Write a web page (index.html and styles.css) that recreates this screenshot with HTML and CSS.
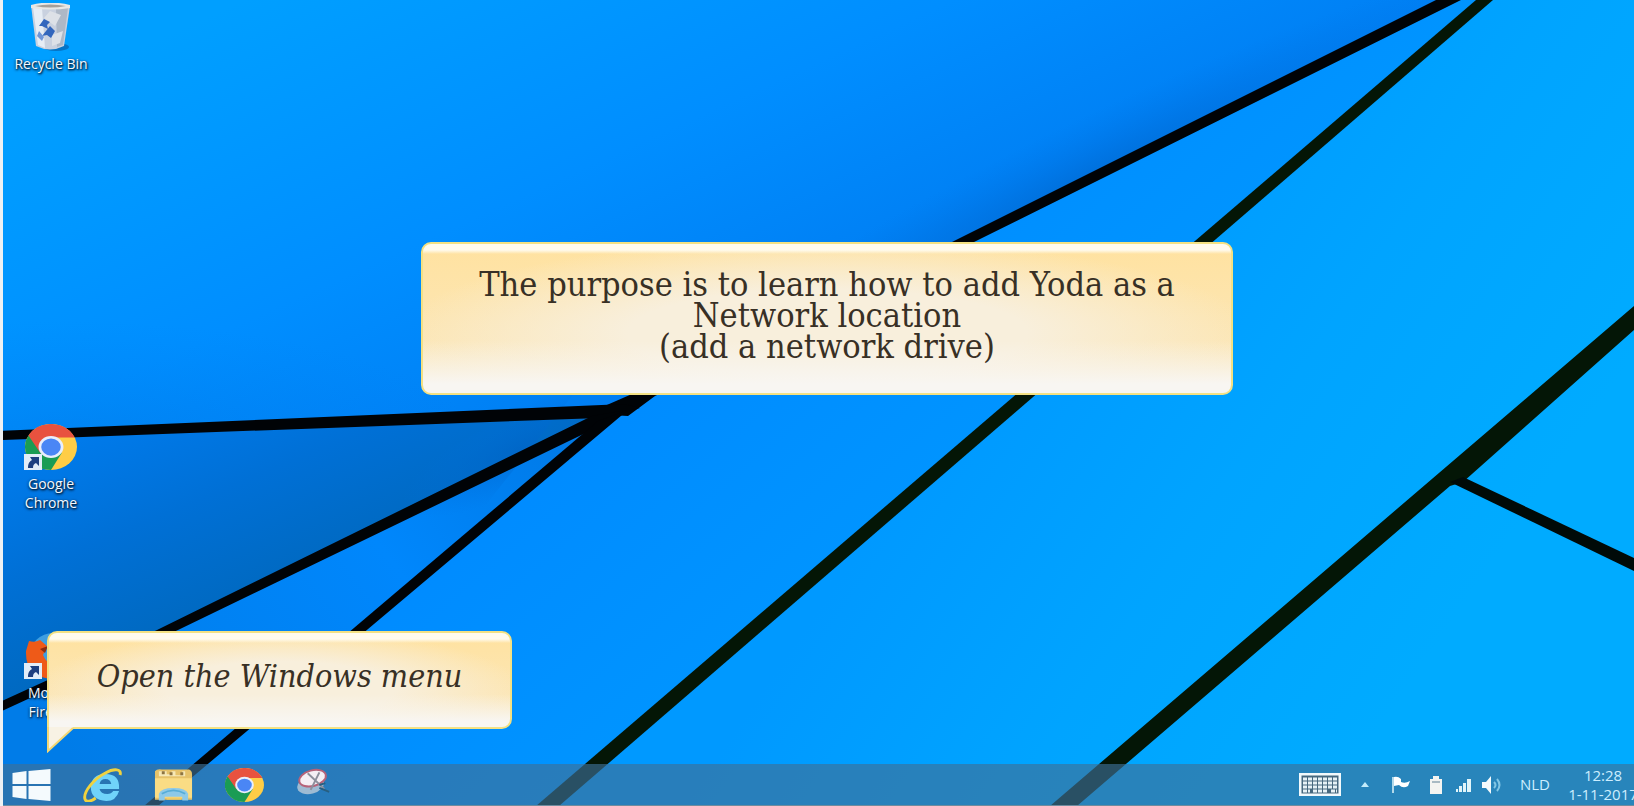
FILE: index.html
```html
<!DOCTYPE html>
<html lang="en">
<head>
<meta charset="utf-8">
<title>Desktop</title>
<link rel="stylesheet" href="styles.css">
</head>
<body>
<svg class="symbols" aria-hidden="true">
  <symbol id="chrome" viewBox="0 0 48 48" preserveAspectRatio="none">
    <circle cx="24" cy="24" r="24" fill="#ffcd46"/>
    <path d="M24 24 3.200 12A24 24 0 0 0 24 48L34 30Z" fill="#1a9c54"/>
    <path d="M3.200 12A24 24 0 0 1 44.800 12L46 14H24L14 30Z" fill="#e8523f"/>
    <circle cx="24" cy="24" r="11.500" fill="#e9eefb"/>
    <circle cx="24" cy="24" r="9" fill="#4a86f5"/>
  </symbol>
  <symbol id="shortcut" viewBox="0 0 18 16">
    <path d="M0 0h18v16H0z" fill="#e2edf8"/>
    <path d="M4 14C4 9 6 7 8 6L6 3h9v9l-3-3c-2 1-3 2-3 5z" fill="#1d3f80"/>
  </symbol>
</svg>
<main class="desktop">
  <svg class="wallpaper" viewBox="0 0 1634 806" preserveAspectRatio="none" aria-hidden="true">
    <defs>
      <linearGradient id="sky" gradientUnits="userSpaceOnUse" x1="420" y1="-80" x2="640" y2="405">
        <stop offset="0" stop-color="#009fff"/><stop offset=".55" stop-color="#008eff"/><stop offset="1" stop-color="#007df2"/>
      </linearGradient>
      <linearGradient id="wedge" gradientUnits="userSpaceOnUse" x1="100" y1="400" x2="200" y2="640">
        <stop offset="0" stop-color="#007df0"/><stop offset=".5" stop-color="#0070d6"/><stop offset="1" stop-color="#0068bd"/>
      </linearGradient>
      <linearGradient id="sliver" gradientUnits="userSpaceOnUse" x1="600" y1="420" x2="100" y2="800">
        <stop offset="0" stop-color="#0078e4"/><stop offset=".4" stop-color="#0087fc"/><stop offset="1" stop-color="#007ce8"/>
      </linearGradient>
      <linearGradient id="band" gradientUnits="userSpaceOnUse" x1="600" y1="400" x2="860" y2="700">
        <stop offset="0" stop-color="#008bff"/><stop offset="1" stop-color="#0098ff"/>
      </linearGradient>
      <linearGradient id="right" gradientUnits="userSpaceOnUse" x1="960" y1="400" x2="1400" y2="700">
        <stop offset="0" stop-color="#0099ff"/><stop offset=".5" stop-color="#00a4ff"/><stop offset="1" stop-color="#00abff"/>
      </linearGradient>
      <radialGradient id="shade">
        <stop offset="0" stop-color="#0064c8" stop-opacity=".6"/><stop offset="1" stop-color="#0070e0" stop-opacity="0"/>
      </radialGradient>
      <clipPath id="above"><path d="M0 0H1448L620 410 0 436Z"/></clipPath>
      <clipPath id="between"><path d="M0 436 620 410 0 708Z"/></clipPath>
    </defs>
    <path d="M0 0H1634V806H0Z" fill="url(#right)"/>
    <path d="M0 0H1485L547 806H0Z" fill="url(#band)"/>
    <path d="M620 410 152 806H0V707Z" fill="url(#sliver)"/>
    <path d="M0 436 620 410 0 708Z" fill="url(#wedge)"/>
    <path d="M0 0H1448L620 410 0 436Z" fill="url(#sky)"/>
    <g clip-path="url(#above)">
      <ellipse cx="1090" cy="180" rx="440" ry="60" transform="rotate(-26 1090 180)" fill="url(#shade)"/>
      <ellipse cx="60" cy="440" rx="420" ry="120" fill="url(#shade)" opacity=".35"/>
    </g>
    <ellipse cx="520" cy="450" rx="130" ry="40" transform="rotate(-26 520 450)" fill="url(#shade)" clip-path="url(#between)"/>
    <g fill="#000306">
      <path d="M1436 0H1461L972 243 655 396 628 416 610 415 600 408 632 394 950 243Z"/>
      <path d="M0 431 625 404 640 408 600 418 0 440Z"/>
      <path d="M592 416 626 410 600 426 178 630 0 712V702L157 630Z"/>
      <path d="M598 421 628 410 158 806H144Z"/>
    </g>
    <g fill="#041606">
      <path d="M1476 0H1493L559 806H536Z"/>
      <path d="M1634 306V330L1463 482 1450 486 1077 806H1050Z"/>
      <path d="M1450 482 1463 477 1634 558V571Z" fill="#000a08"/>
    </g>
  </svg>

  <button class="shortcut shortcut-bin">
    <svg class="bin-art" viewBox="0 0 42 48" aria-hidden="true">
      <ellipse cx="26" cy="44" rx="13" ry="4" fill="#0674c5"/>
      <path d="M1 2 6 43Q20 50 34 43L40 3Z" fill="#c9d1df"/>
      <path d="M3 4 8 42 15 45 12 5Z" fill="#e7edf5"/>
      <path d="M26 6 38 5 33 42 27 44Z" fill="#aeb8c6"/>
      <path d="M1 2Q20-3 40 2V5Q20 8 1 5Z" fill="#e9e8e5"/>
      <path d="M5 3Q20 0 36 3 20 6 5 3Z" fill="#a69f98"/>
      <path d="M20 8 31 12 25 23 14 15ZM22 32 33 28 30 40 22 43Z" fill="#dde1e7"/>
      <path d="m9 23 5-7 6 3-3 3 1 4-6-3zM20 23l5 5-4 7-4-3-5 1 4-5z" fill="#3266bd"/>
      <path d="m9 28 5 6-2 4-5-5z" fill="#6f96d8"/>
    </svg>
    <span class="shortcut-label">Recycle Bin</span>
  </button>
  <button class="shortcut shortcut-chrome">
    <span class="shortcut-art"><svg class="art" aria-hidden="true"><use href="#chrome"/></svg><svg class="arrow" aria-hidden="true"><use href="#shortcut"/></svg></span>
    <span class="shortcut-label">Google Chrome</span>
  </button>
  <button class="shortcut shortcut-firefox">
    <span class="shortcut-art">
      <svg class="art" viewBox="0 0 52 46" aria-hidden="true">
        <ellipse cx="28" cy="22" rx="23" ry="22" fill="#3f9fe0"/>
        <path d="M4 8Q10 10 15 7L22 13 18 22Q22 33 34 32 46 30 48 14 58 44 28 46 0 45 1 18Z" fill="#ee5a18"/>
        <path d="m15 16 8-3-3 7z" fill="#8c2d12"/>
      </svg><svg class="arrow" aria-hidden="true"><use href="#shortcut"/></svg></span>
    <span class="shortcut-label">Mozilla Firefox</span>
  </button>

  <section class="callout callout-purpose">
    <p class="callout-text">The purpose is to learn how to add Yoda as a Network location<br>(add a network drive)</p>
  </section>
  <section class="callout callout-step">
    <p class="callout-text">Open the Windows menu</p>
    <svg class="callout-tail" viewBox="0 0 28 26" aria-hidden="true">
      <path d="M1 0V24L26 1V0Z" fill="#f8f2e4"/>
      <path d="M1 0V24L26 1" fill="none" stroke="#f3d774" stroke-width="2"/>
    </svg>
  </section>

  <footer class="taskbar">
    <nav class="launchers" aria-label="Taskbar">
      <button class="launcher" aria-label="Start">
        <svg class="launcher-art" viewBox="0 0 38 34" aria-hidden="true"><path d="M0 5 14 3V16H0ZM16 3 38 1V16H16ZM0 18H14V31L0 29ZM16 18H38V33L16 31Z" fill="#f4fafd"/></svg>
      </button>
      <button class="launcher" aria-label="Internet Explorer">
        <svg class="launcher-art" viewBox="0 0 40 34" preserveAspectRatio="none" aria-hidden="true">
          <path d="M37 21H17Q18 26 25 26 29 26 31 23H37Q34 33 24 33 8 32 8 19 9 6 23 6 38 6 37 21ZM17 16H29Q28 11 23 11 18 11 17 16Z" fill="#70d3fa"/>
          <path d="M38 7C40 1 32 0 23 5 11 11 0 24 2 31 3 35 9 33 13 30" fill="none" stroke="#efd23f" stroke-width="3"/>
        </svg>
      </button>
      <button class="launcher" aria-label="File Explorer">
        <svg class="launcher-art" viewBox="0 0 40 34" aria-hidden="true">
          <path d="M1 3Q3 0 8 1H36Q39 2 39 6V32H1Z" fill="#e6c269"/>
          <path d="M1 10H39V30H1Z" fill="#fadc84"/>
          <path d="M5 3h8v3h5V3h4v4h7V3h3v5H5Z" fill="#f6e8b6"/>
          <path d="M8 3h3v3H8zM16 4h3v3h-3zM27 4h3v3h-3z" fill="#8d7443"/>
          <path d="M5 33V26Q7 20 20 20T35 26V33H29V29H11V33Z" fill="#8dc9e8"/>
          <path d="M8 26Q20 19 32 26" fill="none" stroke="#56add8" stroke-width="2"/>
          <path d="M13 30H28V32H13Z" fill="#f1cb64"/>
        </svg>
      </button>
      <button class="launcher" aria-label="Google Chrome"><svg class="launcher-art" aria-hidden="true"><use href="#chrome"/></svg></button>
      <button class="launcher" aria-label="Snipping Tool">
        <svg class="launcher-art" viewBox="0 0 40 34" aria-hidden="true">
          <ellipse cx="15" cy="17" rx="14" ry="9" transform="rotate(-15 15 17)" fill="#9ebbd3"/>
          <ellipse cx="17" cy="10" rx="14" ry="8" transform="rotate(-15 17 10)" fill="#f5eff5" stroke="#b66279" stroke-width="2"/>
          <path d="m12 5 17 16M24 4l-9 18" stroke="#8d8f9c" stroke-width="2"/>
          <path d="m24 17 6-2M24 20l10 4" stroke="#285f80" stroke-width="2"/>
        </svg>
      </button>
    </nav>
    <div class="tray">
      <button class="tray-item tray-keyboard" aria-label="Touch keyboard">
        <svg class="tray-art" viewBox="0 0 42 23" aria-hidden="true"><rect x="1" y="1" width="40" height="21" fill="#46687e" stroke="#f1f9fc" stroke-width="3"/><path d="M4 6h34M4 10h34M4 14h34M4 18h7m3 0h15m3 0h6" stroke="#e7f2f6" stroke-width="3" stroke-dasharray="4 1"/></svg>
      </button>
      <button class="tray-item tray-more" aria-label="Show hidden icons"><svg class="tray-art" viewBox="0 0 8 5" aria-hidden="true"><path d="m0 5 4-5 4 5Z" fill="#c2ebfb"/></svg></button>
      <button class="tray-item tray-flag" aria-label="Action Center"><svg class="tray-art" viewBox="0 0 20 17" aria-hidden="true"><path d="M1 1h2v16H1Z" fill="#b2d9ea"/><path d="M3 1Q7 0 10 3V6Q14 8 19 5L17 10Q12 13 8 9L3 10Z" fill="#fff"/></svg></button>
      <button class="tray-item tray-battery" aria-label="Battery"><svg class="tray-art" viewBox="0 0 14 18" aria-hidden="true"><path d="M4 0h6v3h3v15H1V3h3Z" fill="#f4f4f1"/><path d="M3 5h8v2H3Z" fill="#a9bac3"/></svg></button>
      <button class="tray-item tray-signal" aria-label="Network"><svg class="tray-art" viewBox="0 0 17 15" aria-hidden="true"><path d="M1 12h2v3H1zM4 9h3v6H4zM8 6h3v9H8zM12 2h4v13h-4z" fill="#e1f5fa"/></svg></button>
      <button class="tray-item tray-sound" aria-label="Volume"><svg class="tray-art" viewBox="0 0 20 18" aria-hidden="true"><path d="M0 6h4l5-6v18l-5-6H0Z" fill="#f5fafc"/><path d="M12 6q3 3 0 6m3-9q5 6 0 12" fill="none" stroke="#83c6e4" stroke-width="2"/></svg></button>
      <button class="tray-item tray-language">NLD</button>
      <button class="tray-item tray-clock"><time>12:28</time><time>1-11-2017</time></button>
    </div>
  </footer>
</main>
</body>
</html>
```
FILE: styles.css
```css
* {
  box-sizing: border-box;
}

body {
  margin: 0;
  font-family: "Open Sans", "Noto Sans", sans-serif;
}

button {
  padding: 0;
  border: 0;
  background: none;
  color: inherit;
  font: inherit;
}

svg {
  display: block;
}

.symbols {
  position: absolute;
  width: 0;
  height: 0;
}

.desktop {
  position: relative;
  display: flex;
  flex-direction: column;
  justify-content: flex-end;
  min-height: 100vh;
  overflow: hidden;
  border-left: 3px solid #eef1f4;
}

.wallpaper {
  position: absolute;
  top: 0;
  left: -3px;
  width: calc(100% + 3px);
  height: 100%;
}

.shortcut {
  position: absolute;
  left: 3px;
  display: flex;
  flex-direction: column;
  align-items: center;
  width: 90px;
  color: #f2f8ff;
  font-size: 14px;
  line-height: 19px;
}

.shortcut-bin {
  top: 3px;
}

.shortcut-chrome {
  top: 424px;
}

.shortcut-firefox {
  top: 633px;
}

.bin-art {
  width: 42px;
  height: 48px;
  margin-bottom: 3px;
}

.shortcut-art {
  position: relative;
  width: 52px;
  margin-bottom: 4px;
}

.art {
  width: 52px;
  height: 46px;
}

.arrow {
  position: absolute;
  bottom: 0;
  left: -1px;
  width: 18px;
  height: 16px;
}

.shortcut-label {
  max-width: 80px;
  text-shadow: 1px 1px 2px #00182e, 0 1px 3px #00182e;
}

.shortcut-chrome .shortcut-label,
.shortcut-firefox .shortcut-label {
  max-width: 60px;
}

.callout {
  position: absolute;
  border: 2px solid #f3e183;
  border-radius: 10px;
  background:
    linear-gradient(#fffbee 0 6px, transparent 10px),
    linear-gradient(transparent 65%, #f8f6f2 94%),
    radial-gradient(ellipse at 50% 60%, #f8efdc 35%, transparent 75%),
    linear-gradient(#ffe2a0, #fae8c0);
  color: #383025;
  font-family: "DejaVu Serif Condensed", "DejaVu Serif", serif;
  line-height: 31px;
  text-align: center;
}

.callout-text {
  margin: 0;
}

.callout-purpose {
  top: 242px;
  left: 418px;
  width: 812px;
  padding: 25px 45px 31px;
  font-size: 34px;
}

.callout-step {
  top: 631px;
  left: 44px;
  width: 465px;
  padding: 28px 20px 35px;
  border-bottom-left-radius: 0;
  font-size: 32px;
  font-style: italic;
}

.callout-tail {
  position: absolute;
  top: 100%;
  left: -2px;
  width: 28px;
  height: 26px;
}

.taskbar {
  position: relative;
  display: flex;
  align-items: center;
  justify-content: space-between;
  height: 42px;
  border-bottom: 1px solid #6f8c9e;
  background: rgba(62, 112, 150, 0.65);
}

.launchers {
  display: flex;
  gap: 32px;
  padding-left: 9px;
}

.launcher-art {
  width: 39px;
  height: 34px;
}

.tray {
  display: flex;
  align-items: center;
  color: #cdeeff;
  font-size: 15px;
  line-height: 19px;
}

.tray-art {
  width: 100%;
}

.tray-keyboard {
  width: 42px;
  margin-right: 20px;
}

.tray-more {
  width: 8px;
  margin-right: 22px;
}

.tray-flag {
  width: 20px;
  margin-right: 18px;
}

.tray-battery {
  width: 14px;
  margin-right: 12px;
}

.tray-signal {
  width: 17px;
  margin-right: 10px;
}

.tray-sound {
  width: 20px;
  margin-right: 18px;
}

.tray-language {
  margin-right: 16px;
}

.tray-clock {
  display: flex;
  flex-direction: column;
  align-items: center;
  width: 74px;
  margin-right: -6px;
}
```
